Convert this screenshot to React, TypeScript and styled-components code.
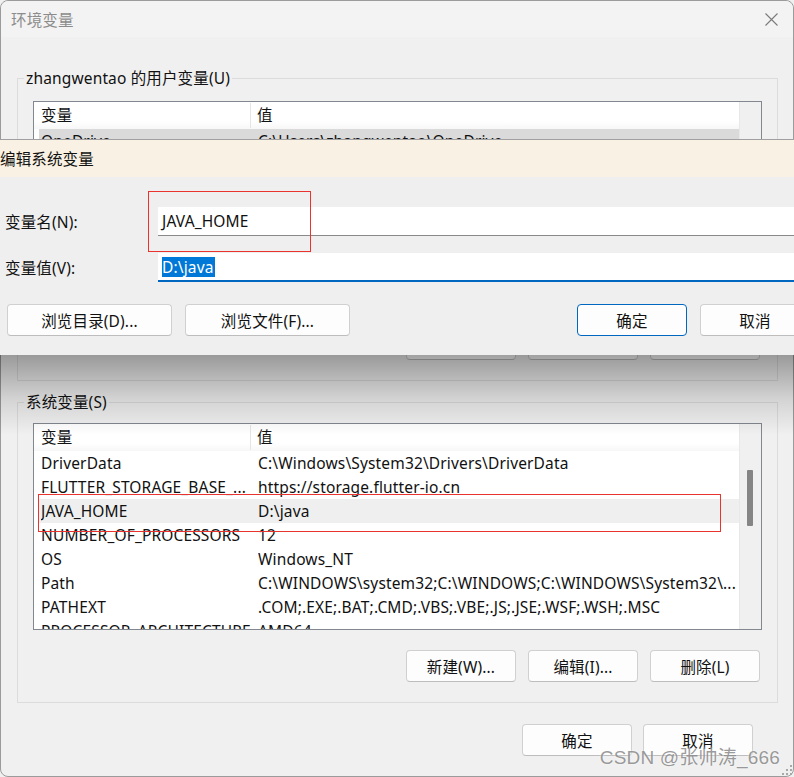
import React from 'react';
import styled, { createGlobalStyle } from 'styled-components';

type EnvVar = { name: string; value: string; selected?: boolean };

const userVars: EnvVar[] = [
    { name: 'OneDrive', value: 'C:\\Users\\zhangwentao\\OneDrive', selected: true },
    { name: 'Path', value: 'C:\\Users\\zhangwentao\\AppData\\Local\\Microsoft\\WindowsApps;' },
    { name: 'TEMP', value: 'C:\\Users\\zhangwentao\\AppData\\Local\\Temp' },
    { name: 'TMP', value: 'C:\\Users\\zhangwentao\\AppData\\Local\\Temp' }
];

const systemVars: EnvVar[] = [
    { name: 'DriverData', value: 'C:\\Windows\\System32\\Drivers\\DriverData' },
    { name: 'FLUTTER_STORAGE_BASE_...', value: 'https://storage.flutter-io.cn' },
    { name: 'JAVA_HOME', value: 'D:\\java', selected: true },
    { name: 'NUMBER_OF_PROCESSORS', value: '12' },
    { name: 'OS', value: 'Windows_NT' },
    { name: 'Path', value: 'C:\\WINDOWS\\system32;C:\\WINDOWS;C:\\WINDOWS\\System32\\...' },
    { name: 'PATHEXT', value: '.COM;.EXE;.BAT;.CMD;.VBS;.VBE;.JS;.JSE;.WSF;.WSH;.MSC' },
    { name: 'PROCESSOR_ARCHITECTURE', value: 'AMD64' }
];

const GlobalStyle = createGlobalStyle`
    html, body {
        margin: 0;
        padding: 0;
        overflow: hidden;
        background: #f0f0f0;
    }
    body {
        font-family: "Noto Sans", "Noto Sans CJK SC", sans-serif;
        font-size: 15.5px;
        letter-spacing: 0.15px;
        color: #111;
    }
    * {
        box-sizing: border-box;
    }
`;

const Stage = styled.div`
    position: relative;
    width: 794px;
    height: 777px;
    overflow: hidden;
`;

const Window = styled.div`
    width: 794px;
    height: 777px;
    border: 1px solid #9b9b9b;
    border-radius: 8px;
    background: #f0f0f0;
    display: flex;
    flex-direction: column;
`;

const TitleBar = styled.div`
    height: 36px;
    display: flex;
    align-items: center;
    justify-content: space-between;
    padding: 0 15px 0 10px;
    color: #8c8c8c;
    background: #f3f3f3;
    border-radius: 8px 8px 0 0;
`;

const Content = styled.div`
    padding: 31px 15px 0 16px;
    display: flex;
    flex-direction: column;
    gap: 11px;
`;

const Group = styled.fieldset<{ $padTop: number }>`
    margin: 0;
    min-width: 0;
    padding: ${({ $padTop }) => $padTop}px 15px 20px 15px;
    border: 1px solid #dcdcdc;
    display: flex;
    flex-direction: column;
    gap: 20px;
`;

const Legend = styled.legend`
    padding: 0 2px;
    margin-left: -9px;
    line-height: 20px;
`;

const ListBox = styled.div`
    height: 207px;
    border: 1px solid #828790;
    background: #fff;
    display: flex;
    overflow: hidden;
`;

const ListContent = styled.div`
    flex: 1;
    min-width: 0;
    display: flex;
    flex-direction: column;
`;

const HeaderRow = styled.div`
    height: 27px;
    flex: none;
    display: grid;
    grid-template-columns: 217px 1fr;
    align-items: center;
    background: linear-gradient(#ffffff, #ffffff 70%, #f7f7f7);
`;

const HeaderCell = styled.div<{ $divider?: boolean }>`
    height: 25px;
    line-height: 25px;
    padding-left: ${({ $divider }) => ($divider ? '7px' : '6px')};
    border-right: ${({ $divider }) => ($divider ? '1px solid #e5e5e5' : 'none')};
`;

const Row = styled.div<{ $selected?: boolean; $tone?: string }>`
    height: 24px;
    flex: none;
    margin-left: 5px;
    padding-left: 2px;
    display: grid;
    grid-template-columns: 217px 1fr;
    align-items: center;
    background: ${({ $selected, $tone }) => ($selected ? $tone : 'transparent')};
`;

const Cell = styled.div`
    white-space: nowrap;
    overflow: hidden;
    line-height: 24px;
`;

const ScrollTrack = styled.div`
    width: 22px;
    flex: none;
    background: #f0f0f0;
    border-left: 1px solid #e8e8e8;
`;

const ScrollThumb = styled.div`
    width: 6px;
    height: 56px;
    margin: 46px 0 0 7px;
    background: #858585;
    border-radius: 1px;
`;

const ButtonRow = styled.div<{ $gap: number; $padRight: number }>`
    display: flex;
    justify-content: flex-end;
    gap: ${({ $gap }) => $gap}px;
    padding-right: ${({ $padRight }) => $padRight}px;
`;

const Button = styled.button<{ $width: number; $primary?: boolean }>`
    width: ${({ $width }) => $width}px;
    height: 32px;
    flex: none;
    padding: 0;
    font-family: inherit;
    font-size: 15.5px;
    letter-spacing: 0.15px;
    color: #111;
    background: #fdfdfd;
    border: 1px solid ${({ $primary }) => ($primary ? '#0067c0' : '#d0d0d0')};
    border-bottom-color: ${({ $primary }) => ($primary ? '#0067c0' : '#bdbdbd')};
    border-radius: 4px;
`;

const BottomBar = styled.div`
    margin-top: 21px;
    display: flex;
    justify-content: flex-end;
    gap: 11px;
    padding-right: 40px;
`;

const Dialog = styled.div`
    position: absolute;
    top: 139px;
    left: -10px;
    width: 836px;
    height: 216px;
    border-top: 1px solid #a0a0a0;
    background: #efefef;
    display: flex;
    flex-direction: column;

    &::after {
        content: '';
        position: absolute;
        top: 100%;
        left: 0;
        right: 0;
        height: 80px;
        background: linear-gradient(rgba(0, 0, 0, 0.36), rgba(0, 0, 0, 0.12) 55%, rgba(0, 0, 0, 0));
        pointer-events: none;
    }
`;

const DialogTitle = styled.div`
    height: 37px;
    flex: none;
    display: flex;
    align-items: center;
    padding-left: 10px;
    background: #f9f1e3;
`;

const DialogBody = styled.div`
    padding: 30px 16px 0 15px;
    display: grid;
    grid-template-columns: 153px 1fr;
    row-gap: 17px;
    align-items: center;
`;

const FieldLabel = styled.label`
    line-height: 20px;
`;

const TextInput = styled.div<{ $focused?: boolean }>`
    height: 29px;
    background: #fff;
    padding: 0 0 0 4px;
    display: flex;
    align-items: center;
    border-bottom: ${({ $focused }) => ($focused ? '2px solid #0067c0' : '1px solid #8a8a8a')};
    line-height: 20px;
`;

const Selection = styled.span`
    background: #0078d7;
    color: #fff;
    padding-right: 1px;
`;

const DialogButtons = styled.div`
    grid-column: 1 / -1;
    margin-top: 5px;
    padding-left: 2px;
    display: flex;
    gap: 13px;
`;

const Spacer = styled.div`
    flex: 1;
`;

const RedBox = styled.div<{ $x: number; $y: number; $w: number; $h: number }>`
    position: absolute;
    left: ${({ $x }) => $x}px;
    top: ${({ $y }) => $y}px;
    width: ${({ $w }) => $w}px;
    height: ${({ $h }) => $h}px;
    border: 1px solid #e8332f;
    pointer-events: none;
`;

const Watermark = styled.div`
    position: absolute;
    right: 14px;
    bottom: 8px;
    font-family: "Liberation Sans", "Noto Sans CJK SC", sans-serif;
    font-size: 19px;
    letter-spacing: 0.2px;
    color: rgba(110, 110, 110, 0.7);
    text-shadow: 0 0 2px rgba(255, 255, 255, 0.9);
`;

const Grip = styled.svg`
    position: absolute;
    right: 2px;
    bottom: 2px;
`;

function VarList({ rows, tone }: { rows: EnvVar[]; tone: string }) {
    return (
        <ListBox>
            <ListContent>
                <HeaderRow>
                    <HeaderCell $divider>变量</HeaderCell>
                    <HeaderCell>值</HeaderCell>
                </HeaderRow>
                {rows.map(r => (
                    <Row key={r.name} $selected={r.selected} $tone={tone}>
                        <Cell>{r.name}</Cell>
                        <Cell>{r.value}</Cell>
                    </Row>
                ))}
            </ListContent>
            <ScrollTrack>
                <ScrollThumb />
            </ScrollTrack>
        </ListBox>
    );
}

export default function App() {
    return (
        <Stage>
            <GlobalStyle />
            <Window>
                <TitleBar>
                    <span>环境变量</span>
                    <svg width="13" height="13" viewBox="0 0 13 13">
                        <path d="M0.5 0.5 L12.5 12.5 M12.5 0.5 L0.5 12.5" stroke="#7a7a7a" strokeWidth="1.1" />
                    </svg>
                </TitleBar>

                <Content>
                    <Group $padTop={13}>
                        <Legend>zhangwentao 的用户变量(U)</Legend>
                        <VarList rows={userVars} tone="#dadada" />
                        <ButtonRow $gap={12} $padRight={2}>
                            <Button $width={110}>新建(N)...</Button>
                            <Button $width={110}>编辑(E)...</Button>
                            <Button $width={110}>删除(D)</Button>
                        </ButtonRow>
                    </Group>

                    <Group $padTop={11}>
                        <Legend>系统变量(S)</Legend>
                        <VarList rows={systemVars} tone="#efefef" />
                        <ButtonRow $gap={12} $padRight={2}>
                            <Button $width={110}>新建(W)...</Button>
                            <Button $width={110}>编辑(I)...</Button>
                            <Button $width={110}>删除(L)</Button>
                        </ButtonRow>
                    </Group>
                </Content>

                <BottomBar>
                    <Button $width={110}>确定</Button>
                    <Button $width={110}>取消</Button>
                </BottomBar>
            </Window>

            <Dialog>
                <DialogTitle>编辑系统变量</DialogTitle>
                <DialogBody>
                    <FieldLabel>变量名(N):</FieldLabel>
                    <TextInput>JAVA_HOME</TextInput>
                    <FieldLabel>变量值(V):</FieldLabel>
                    <TextInput $focused>
                        <Selection>D:\java</Selection>
                    </TextInput>
                    <DialogButtons>
                        <Button $width={165}>浏览目录(D)...</Button>
                        <Button $width={165}>浏览文件(F)...</Button>
                        <Spacer />
                        <Button $width={110} $primary>确定</Button>
                        <Button $width={110}>取消</Button>
                    </DialogButtons>
                </DialogBody>
            </Dialog>

            <RedBox $x={148} $y={191} $w={163} $h={61} />
            <RedBox $x={38} $y={494} $w={683} $h={38} />

            <Watermark>CSDN @张帅涛_666</Watermark>
            <Grip width="10" height="10" viewBox="0 0 10 10">
                {[[8, 0], [8, 4], [4, 4], [8, 8], [4, 8], [0, 8]].map(([x, y]) => (
                    <rect key={`${x}-${y}`} x={x} y={y} width="2" height="2" fill="#a8a8a8" />
                ))}
            </Grip>
        </Stage>
    );
}
